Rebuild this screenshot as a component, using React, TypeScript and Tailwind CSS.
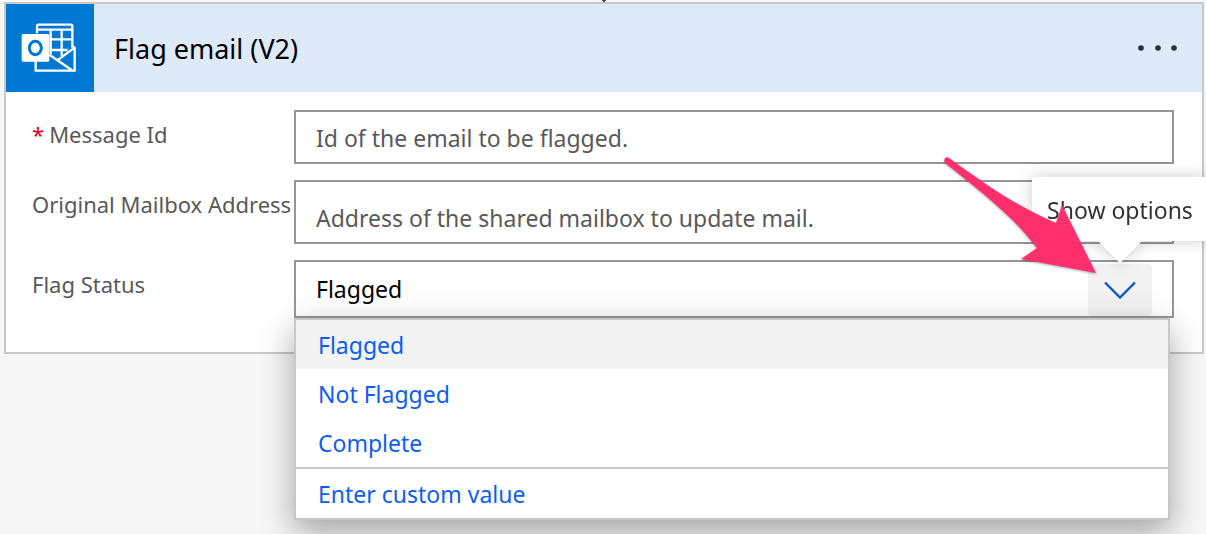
import { useState } from "react";
import type { ReactNode } from "react";

const OPTIONS = ["Flagged", "Not Flagged", "Complete"];

function OutlookIcon() {
  return (
    <svg viewBox="0 0 264 264" className="size-22 shrink-0 bg-[#0078d4]" aria-hidden="true">
      <g fill="none" stroke="#fff" strokeWidth="7" strokeLinejoin="round">
        <path d="M93 88V67q0-5 5-5h96q5 0 5 5v64" />
        <path d="M93 77h106" />
        <path d="M134 77v74M167 77v78M130 106h69M130 138h55" />
        <path d="M198 126l8 5v69H89v-27" />
        <path d="M206 131l-52 38M130 152l67 46" />
      </g>
      <rect x="47" y="90" width="83" height="83" rx="5" fill="#fff" />
      <ellipse cx="88" cy="132" rx="18" ry="20" fill="none" stroke="#0078d4" strokeWidth="9" />
    </svg>
  );
}

function Field({ id, label, required, children }: { id: string; label: string; required?: boolean; children: ReactNode }) {
  return (
    <div className="flex items-start">
      <label htmlFor={id} className="w-[262px] shrink-0 text-[22px] leading-12 whitespace-nowrap text-[#595959]">
        {required && <span className="mr-[5px] text-[#e0001b]">*</span>}
        {label}
      </label>
      <div className="relative min-w-0 flex-1">{children}</div>
    </div>
  );
}

export default function App() {
  const [status, setStatus] = useState("Flagged");
  const [open, setOpen] = useState(true);

  return (
    <main className="min-h-screen overflow-hidden bg-[#f7f7f7] pr-0.5 pl-1 font-['Noto_Sans',sans-serif] text-[23px]">
      <svg viewBox="0 0 4 2" className="mx-auto h-0.5 w-1" aria-hidden="true">
        <path d="M0 0h4L2.500 2h-1z" fill="#333" />
      </svg>
      <section className="border-2 border-[#c8c8c8] bg-white">
        <header className="flex items-center bg-[#deeaf8]">
          <OutlookIcon />
          <h1 className="flex-1 pt-0.5 pl-5 text-[27px] text-black">Flag email (V2)</h1>
          <button type="button" aria-label="More commands" className="mr-5 p-1">
            <svg viewBox="0 0 40 6" className="h-1.5 w-10" fill="#23303d">
              <circle cx="3" cy="3" r="2.800" />
              <circle cx="20" cy="3" r="2.800" />
              <circle cx="36" cy="3" r="2.800" />
            </svg>
          </button>
        </header>

        <div className="flex flex-col gap-4 pt-[18px] pr-7 pb-[34px] pl-[26px]">
          <Field id="message-id" label="Message Id" required>
            <input
              id="message-id"
              placeholder="Id of the email to be flagged."
              className="block h-[54px] w-full border-2 border-[#969696] bg-white px-5 pt-0.5 placeholder:text-[#595959]"
            />
          </Field>
          <Field id="mailbox" label="Original Mailbox Address">
            <input
              id="mailbox"
              placeholder="Address of the shared mailbox to update mail."
              className="block h-16 w-full border-2 border-[#969696] bg-white px-5 pt-3 placeholder:text-[#595959]"
            />
          </Field>
          <Field id="flag-status" label="Flag Status">
            <div className="flex items-end border-2 border-[#969696] bg-white pr-5">
              <input
                id="flag-status"
                role="combobox"
                aria-expanded={open}
                aria-controls="flag-options"
                value={status}
                onChange={(e) => setStatus(e.target.value)}
                className="h-[54px] min-w-0 flex-1 bg-transparent pl-5 text-black outline-none"
              />
              <div className="relative">
                <button
                  type="button"
                  aria-label="Show options"
                  onClick={() => setOpen(!open)}
                  className="flex h-[52px] w-16 items-center justify-center rounded-sm bg-[#f2f2f2]"
                >
                  <svg viewBox="0 0 32 18" className="h-[18px] w-8" fill="none" stroke="#0b57d0" strokeWidth="2.400">
                    <path d="M1 1.500l15 15 15-15" />
                  </svg>
                </button>
                <div
                  role="tooltip"
                  className="absolute bottom-full left-1/2 z-20 mb-[23px] flex h-16 w-44 -translate-x-1/2 items-center justify-center bg-white pt-0.5 whitespace-nowrap text-[#333] drop-shadow-[0_0_8px_rgba(0,0,0,0.2)]"
                >
                  Show options
                  <svg viewBox="0 0 44 22" className="absolute top-full left-1/2 h-[22px] w-11 -translate-x-1/2" fill="#fff" aria-hidden="true">
                    <path d="M0 0h44L22 22z" />
                  </svg>
                </div>
                <svg
                  viewBox="0 0 156 120"
                  className="pointer-events-none absolute right-[55px] bottom-10 z-30 h-[120px] w-[156px] drop-shadow-[0_1px_1px_rgba(0,0,0,0.35)]"
                  fill="#ff2f6e"
                  aria-hidden="true"
                >
                  <path d="M8 2C44 28 75 50 115 67L121 49L155 117L80 103L96 92C74 62 38 34 4 7C2 3 5 0 8 2z" />
                </svg>
              </div>
            </div>
            {open && (
              <ul
                id="flag-options"
                className="absolute top-full right-1 left-0 z-10 border-2 border-[#c8c8c8] bg-white text-[#0d5eee] shadow-[0_12px_32px_rgba(0,0,0,0.35)]"
              >
                {OPTIONS.map((option) => (
                  <li key={option}>
                    <button
                      type="button"
                      onClick={() => setStatus(option)}
                      className={`block h-[49px] w-full px-[22px] pt-0.5 text-left ${option === status ? "bg-[#f3f3f3]" : "bg-white"}`}
                    >
                      {option}
                    </button>
                  </li>
                ))}
                <li className="border-t-2 border-[#c8c8c8]">
                  <button type="button" onClick={() => setStatus("")} className="block h-[49px] w-full px-[22px] pt-0.5 text-left">
                    Enter custom value
                  </button>
                </li>
              </ul>
            )}
          </Field>
        </div>
      </section>
    </main>
  );
}
